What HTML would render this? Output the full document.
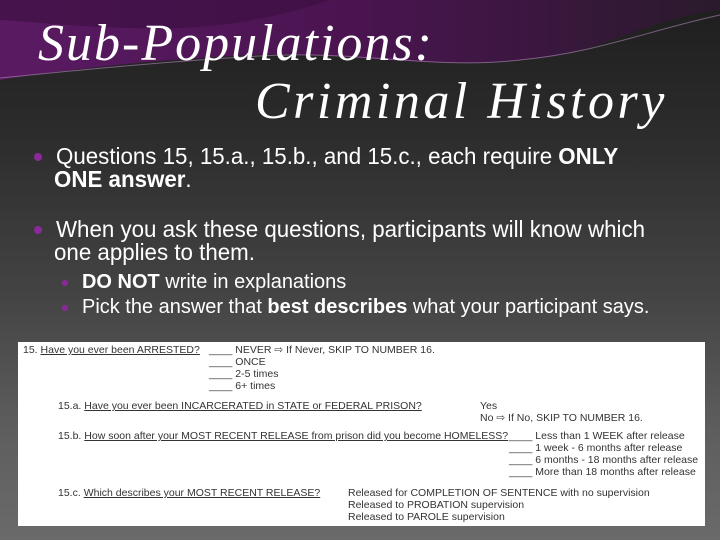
<!DOCTYPE html>
<html><head><meta charset="utf-8"><style>
*{margin:0;padding:0;box-sizing:border-box}
body{width:720px;height:540px;overflow:hidden;position:relative;font-family:"Liberation Sans",sans-serif;
background:linear-gradient(180deg,#1e1e1e 0%,#2c2c2c 25%,#444 55%,#5e5e5e 80%,#6a6a6a 100%);}
.t{position:absolute;color:#fff;font-family:"Liberation Serif",serif;font-style:italic;font-size:52px;white-space:nowrap;letter-spacing:2px}
.b{position:absolute;color:#fff;font-size:23px;white-space:nowrap;transform:scaleX(.97);transform-origin:left}
.s{font-size:20.6px}
.dot{position:absolute;width:8px;height:8px;border-radius:50%;background:#8a2a9a}
.img{position:absolute;left:18px;top:342px;width:687px;height:184px;background:#fff;color:#333;font-size:10.5px}
.img div{position:absolute;white-space:nowrap}
u{text-decoration:underline}
</style></head><body>
<svg style="position:absolute;left:0;top:0" width="720" height="100">
<defs><linearGradient id="g" x1="0" x2="1"><stop offset="0" stop-color="#5a1a62"/><stop offset=".5" stop-color="#4a1450"/><stop offset="1" stop-color="#2a1a2c"/></linearGradient></defs>
<path d="M0 0H720V10C640 20 600 55 520 60C420 70 330 50 250 55C150 60 60 70 0 80Z" fill="url(#g)"/>
<path d="M0 0H330C300 10 250 25 180 28C100 30 40 22 0 20Z" fill="#3a0f40" opacity=".6"/>
<path d="M0 78C80 70 160 62 260 56C360 50 430 70 520 60C600 52 650 30 720 15" stroke="#a07aa8" stroke-width="1" fill="none" opacity=".7"/>
</svg>
<div class="t" style="left:38px;top:14px">Sub-Populations:</div>
<div class="t" style="left:255px;top:72px;letter-spacing:3.5px">Criminal History</div>
<div class="dot" style="left:34px;top:153px"></div>
<div class="b" style="left:56px;top:143px"> Questions 15, 15.a., 15.b., and 15.c., each require <b>ONLY</b></div>
<div class="b" style="left:54px;top:166px"><b>ONE answer</b>.</div>
<div class="dot" style="left:34px;top:226px"></div>
<div class="b" style="left:56px;top:216px"> When you ask these questions, participants will know which</div>
<div class="b" style="left:54px;top:239px">one applies to them.</div>
<div class="dot" style="left:62px;top:280px;width:6px;height:6px"></div>
<div class="b s" style="left:82px;top:270px"><b>DO NOT</b> write in explanations</div>
<div class="dot" style="left:62px;top:305px;width:6px;height:6px"></div>
<div class="b s" style="left:82px;top:295px">Pick the answer that <b>best describes</b> what your participant says.</div>
<div class="img">
<div style="left:5px;top:2px">15. <u>Have you ever been ARRESTED?</u></div>
<div style="left:191px;top:2px">____ NEVER ⇨ If Never, SKIP TO NUMBER 16.</div>
<div style="left:191px;top:14px">____ ONCE</div>
<div style="left:191px;top:26px">____ 2-5 times</div>
<div style="left:191px;top:38px">____ 6+ times</div>
<div style="left:40px;top:58px">15.a. <u>Have you ever been INCARCERATED in STATE or FEDERAL PRISON?</u></div>
<div style="left:462px;top:58px">Yes</div>
<div style="left:462px;top:70px">No ⇨ If No, SKIP TO NUMBER 16.</div>
<div style="left:40px;top:88px">15.b. <u>How soon after your MOST RECENT RELEASE from prison did you become HOMELESS?</u></div>
<div style="left:491px;top:88px">____ Less than 1 WEEK after release</div>
<div style="left:491px;top:100px">____ 1 week - 6 months after release</div>
<div style="left:491px;top:112px">____ 6 months - 18 months after release</div>
<div style="left:491px;top:124px">____ More than 18 months after release</div>
<div style="left:40px;top:145px">15.c. <u>Which describes your MOST RECENT RELEASE?</u></div>
<div style="left:330px;top:145px">Released for COMPLETION OF SENTENCE with no supervision</div>
<div style="left:330px;top:157px">Released to PROBATION supervision</div>
<div style="left:330px;top:169px">Released to PAROLE supervision</div>
</div>
</body></html>
